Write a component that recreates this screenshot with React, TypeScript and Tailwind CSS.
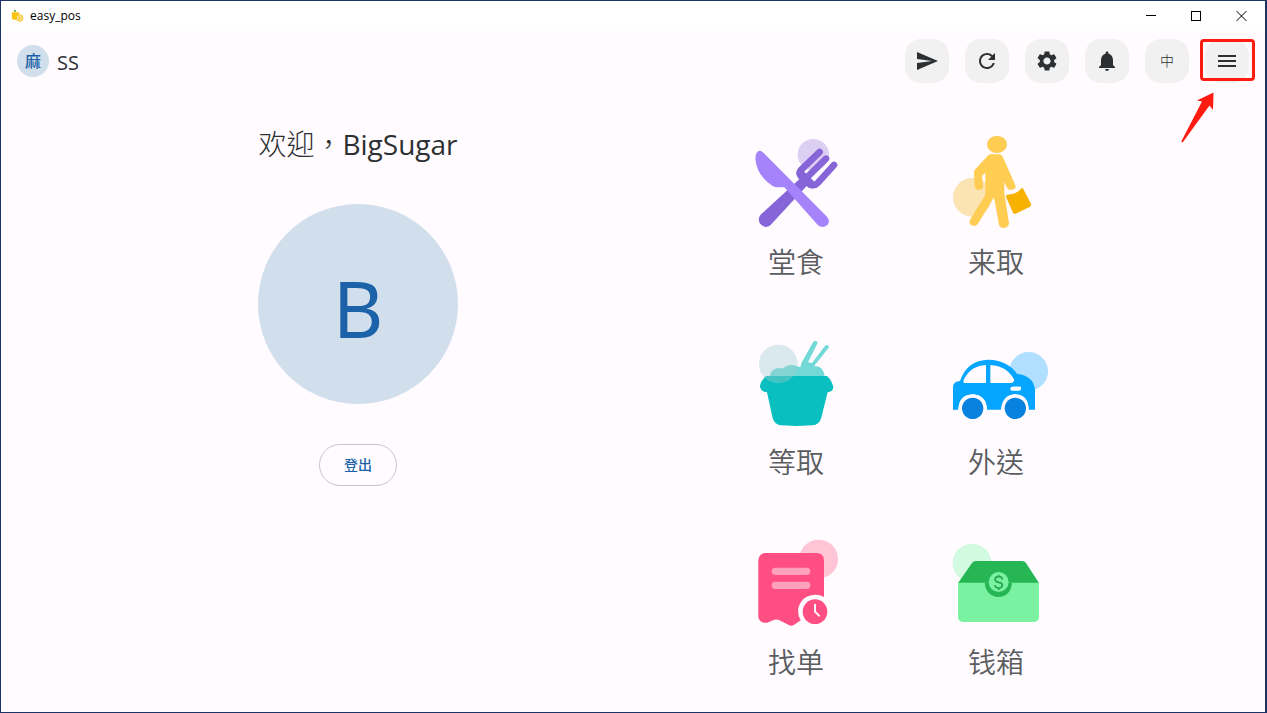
import type { ReactNode } from "react";
import { MdMenu, MdNotifications, MdRefresh, MdSend, MdSettings } from "react-icons/md";

function AppLogo() {
  return (
    <svg viewBox="0 0 42 42" className="size-3.5" aria-hidden="true">
      <path d="M5 10h22v22H12L6 30Z" fill="#f8c210" />
      <path d="M12 3h6v5h-6z" fill="#6fae3f" />
      <circle cx="29" cy="27" r="10" fill="#fdeeb0" stroke="#f6c531" strokeWidth="3" />
      <path d="M29 18v18M20 27h18M23 21l12 12M35 21 23 33" stroke="#f6c531" strokeWidth="2" />
    </svg>
  );
}

function Art({ viewBox = "0 0 336 336", children }: { viewBox?: string; children: ReactNode }) {
  return (
    <svg viewBox={viewBox} className="size-28" aria-hidden="true">
      {children}
    </svg>
  );
}

function DineInArt() {
  return (
    <Art viewBox="0 15 336 336">
      <circle cx="220" cy="89" r="47" fill="#dccff2" />
      <g stroke="#8665d9" fill="none" strokeLinecap="round" strokeLinejoin="round" strokeWidth="20">
        <path d="M239 81 183 135q-8 9-1 18l30 26q12 5 21-5l49-54" />
        <path d="M258 101 204 154" />
      </g>
      <path d="M172 134 190 138 206 152 226 174 222 188Q208 193 200 183L91 301Q75 312 61 297 51 282 63 268L181 160Z" fill="#8665d9" />
      <path d="M46 101Q47 77 60 77 66 78 71 84L261 275Q272 289 262 300 249 311 234 301L133 187H108Q96 184 83 172 50 144 46 101Z" fill="#a583fb" />
    </Art>
  );
}

function PickupArt() {
  return (
    <Art viewBox="0 15 336 336">
      <circle cx="97" cy="217" r="58" fill="#fbe3b2" />
      <ellipse cx="171" cy="58" rx="30" ry="26" fill="#fecd52" />
      <path d="M148 88H180Q187 91 190 99L226 181Q229 190 221 193L210 195Q204 195 200 187L193 171V205L207 294Q206 308 191 309 181 309 177 299L162 217 113 298Q105 306 93 300 85 293 91 283L136 210V143L126 153 129 184Q128 195 116 195 106 194 104 184L102 142Q102 136 107 131Z" fill="#fecd52" />
      <path d="M198 216Q196 211 202 209 231 207 243 191 247 187 250 192L273 236Q275 242 270 245L227 266Q222 268 219 263Z" fill="#f7b100" />
    </Art>
  );
}

function WaitArt() {
  return (
    <Art>
      <path d="M90 138Q92 115 119 114 132 117 135 110 150 101 169 108L181 112 184 100 219 37Q224 29 232 35 234 39 230 45L204 97 216 99 255 48Q261 42 266 48 268 52 263 57L222 109Q249 105 254 138Z" fill="#73d9d6" />
      <path d="M78 138H261Q277 153 280 172 279 186 263 187L243 266Q237 284 218 286L170 288 121 286Q104 283 98 265L81 187Q60 184 60 167 62 153 78 138Z" fill="#0abfbf" />
      <circle cx="115" cy="102" r="58" fill="#9dcecf" opacity=".38" />
    </Art>
  );
}

function DeliveryArt() {
  return (
    <Art>
      <circle cx="266" cy="124" r="58" fill="#b0dfff" />
      <path d="M39 239V170Q40 155 60 153 81 90 145 89 202 90 231 131 280 137 285 178V239H266Q265 194 226 193 188 194 183 239H141Q139 195 98 193 56 196 55 239Z" fill="#06a5ff" />
      <path d="M55 240Q57 195 98 193 139 196 141 240ZM183 240Q188 195 226 193 265 196 266 240Z" fill="#fffbff" />
      <path d="M75 159Q67 159 72 148 91 108 138 105V159ZM151 105Q200 108 222 148 224 158 213 159H151Z" fill="#fffbff" />
      <rect x="211" y="170" width="32" height="12" rx="6" fill="#fffbff" />
      <path d="M219 170h24v7z" fill="#fffbff" />
      <circle cx="98" cy="235" r="32" fill="#0882df" />
      <circle cx="226" cy="235" r="32" fill="#0882df" />
    </Art>
  );
}

function FindOrderArt() {
  return (
    <Art>
      <circle cx="236" cy="87" r="58" fill="#ffc4d6" />
      <path d="M75 69H232Q251 71 252 90V225L180 272 160 286Q153 289 145 284L121 272Q109 266 99 271L82 278Q59 281 55 262V90Q57 71 75 69Z" fill="#ff4e82" />
      <path d="M106 124h94M106 166h94" stroke="#ffa1bd" strokeWidth="22" strokeLinecap="round" />
      <path d="M252 201Q238 193 220 195 181 199 174 240 174 258 182 271L210 285 263 256Z" fill="#fffbff" />
      <circle cx="225" cy="245" r="37" fill="#ff4e82" />
      <path d="M225 224v21l12 12" fill="none" stroke="#fffbff" strokeWidth="6" strokeLinecap="round" />
    </Art>
  );
}

function CashBoxArt() {
  return (
    <Art>
      <circle cx="96" cy="99" r="58" fill="#d2fae1" />
      <path d="M54 159 96 99Q100 93 108 93H246Q254 93 258 99L297 159Z" fill="#26b654" />
      <path d="M54 158H297V262Q296 275 283 276H68Q56 275 54 262Z" fill="#7af2a2" />
      <path d="M134 158Q138 198 175 201 212 199 216 158Z" fill="#26b654" />
      <circle cx="176" cy="156" r="30" fill="#7af2a2" />
      <path d="M187 149Q187 140 176 140 166 140 165 148 166 155 176 157 187 159 187 166 186 174 176 174 165 174 165 165M176 134v7M176 173v7" fill="none" stroke="#26a64e" strokeWidth="5" />
    </Art>
  );
}

const modes = [
  { label: "堂食", art: <DineInArt /> },
  { label: "来取", art: <PickupArt /> },
  { label: "等取", art: <WaitArt /> },
  { label: "外送", art: <DeliveryArt /> },
  { label: "找单", art: <FindOrderArt /> },
  { label: "钱箱", art: <CashBoxArt /> },
];

const actions = [
  { name: "发送", icon: <MdSend size={24} /> },
  { name: "刷新", icon: <MdRefresh size={24} /> },
  { name: "设置", icon: <MdSettings size={24} /> },
  { name: "通知", icon: <MdNotifications size={24} /> },
  { name: "语言", icon: <span className="text-sm font-light">中</span> },
];

const actionClass = "flex size-11 items-center justify-center rounded-2xl bg-[#f1f1f1] text-[#2d3032]";

function TitleBar() {
  return (
    <div className="flex h-[30px] items-center justify-between bg-white pl-[9px] text-black">
      <div className="flex items-center gap-1.5 text-xs">
        <AppLogo />
        <span>easy_pos</span>
      </div>
      <div className="flex h-full">
        <button aria-label="最小化" className="flex w-[45px] items-center justify-center">
          <svg width="10" height="10" stroke="currentColor" shapeRendering="crispEdges"><path d="M0 4.500h10" /></svg>
        </button>
        <button aria-label="最大化" className="flex w-[45px] items-center justify-center">
          <svg width="10" height="10" stroke="currentColor" fill="none" shapeRendering="crispEdges"><path d="M.5 .5h9v9h-9z" /></svg>
        </button>
        <button aria-label="关闭" className="flex w-[47px] items-center justify-center">
          <svg width="11" height="10" stroke="currentColor"><path d="M.5 0l10 10M10.500 0l-10 10" /></svg>
        </button>
      </div>
    </div>
  );
}

export default function App() {
  return (
    <div className="flex min-h-screen flex-col border border-r-2 border-[#1b3365] bg-[#fffbff] font-['Open_Sans','Noto_Sans_CJK_TC',sans-serif] text-[#2d3032]">
      <TitleBar />
      <header className="flex items-center justify-between px-4 py-2">
        <div className="flex items-center gap-2">
          <span className="flex size-8 items-center justify-center rounded-full bg-[#d1dfec] text-base font-medium text-[#1b62a8]">麻</span>
          <span className="pt-1 text-xl">SS</span>
        </div>
        <nav className="flex gap-4">
          {actions.map((a) => (
            <button key={a.name} aria-label={a.name} className={actionClass}>{a.icon}</button>
          ))}
          <div className="relative">
            <button aria-label="菜单" className={actionClass}><MdMenu size={24} /></button>
            <span className="pointer-events-none absolute -left-[5px] top-0 h-[42px] w-[55px] rounded border-3 border-[#ff1b10]" />
            <svg viewBox="0 0 34 52" className="pointer-events-none absolute -left-6 top-[53px] h-[52px] w-[34px]" aria-hidden="true">
              <path d="M32.500 .5 16 8.500l5 1L.5 49q0 2 1.500 1L28.500 13.500 32 18Z" fill="#ff1b10" />
            </svg>
          </div>
        </nav>
      </header>
      <main className="flex flex-1 items-start pb-6">
        <section className="flex flex-1 flex-col items-center pl-[19px] pt-8">
          <h1 className="text-[28px] leading-[42px]">
            <span className="font-light">欢迎，</span>BigSugar
          </h1>
          <div className="mt-[39px] flex size-[200px] items-center justify-center rounded-full bg-[#d1dfec] pt-2 font-['Noto_Sans',sans-serif] text-[78px] leading-none text-[#1b62a8]">B</div>
          <button className="mt-10 h-[42px] rounded-full border border-[#c4c7c9] px-6 text-sm font-medium text-[#1b62a8]">登出</button>
        </section>
        <section className="mr-[169px] grid grid-cols-[200px_200px] gap-y-12 pt-[39px]">
          {modes.map((m) => (
            <button key={m.label} className="flex flex-col items-center">
              {m.art}
              <span className="text-[28px] font-[350] leading-10 text-[#5a5d5f]">{m.label}</span>
            </button>
          ))}
        </section>
      </main>
    </div>
  );
}
